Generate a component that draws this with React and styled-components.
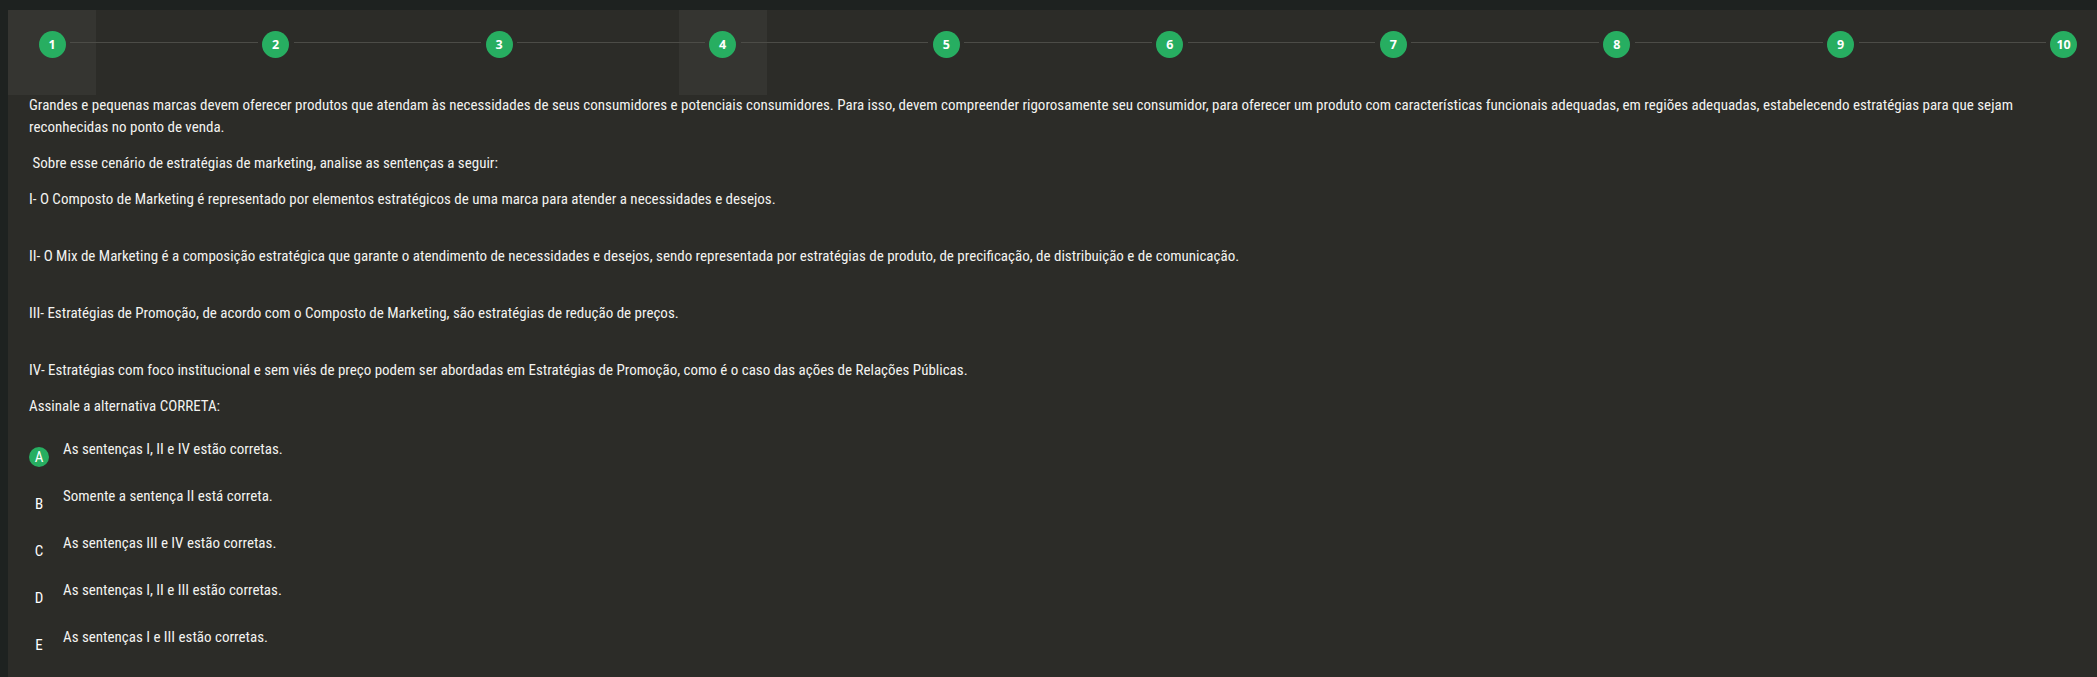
import React from "react";
import styled, { createGlobalStyle } from "styled-components";

const GlobalStyle = createGlobalStyle`
  html, body {
    margin: 0;
    padding: 0;
    background: #1e2220;
  }
  body {
    font-family: Roboto, "Open Sans", "Liberation Sans", sans-serif;
    font-stretch: 75%;
    font-weight: 400;
    color: #f3f3f0;
  }
  * { box-sizing: border-box; }
`;

const Page = styled.div`
  padding: 10px 0 0 8px;
  min-height: 100vh;
`;

const Panel = styled.main`
  background: #2c2c28;
  min-height: calc(100vh - 10px);
  overflow: hidden;
`;

const Stepper = styled.nav`
  display: flex;
  align-items: flex-start;
`;

const Step = styled.div`
  display: flex;
  align-items: flex-start;
  flex: ${(p) => (p.$last ? "none" : "1 1 0")};
  min-width: 0;
`;

const StepCell = styled.div`
  flex: none;
  width: ${(p) => (p.$last ? "77px" : "88px")};
  height: 85px;
  padding-top: 21px;
  padding-left: ${(p) => (p.$last ? "30px" : "0")};
  display: flex;
  justify-content: ${(p) => (p.$last ? "flex-start" : "center")};
  background: ${(p) => (p.$highlight ? "#353531" : "transparent")};
`;

const StepCircle = styled.span`
  width: 27px;
  height: 27px;
  border-radius: 50%;
  background: #27ae61;
  color: #ffffff;
  display: flex;
  align-items: center;
  justify-content: center;
  font-family: "Open Sans", sans-serif;
  font-stretch: 100%;
  font-weight: 700;
  font-size: 12.5px;
  position: relative;
  z-index: 2;
`;

const Connector = styled.span`
  flex: 1 1 auto;
  height: 1px;
  margin: 32px -26px 0;
  background: #4c4c47;
  position: relative;
  z-index: 1;
`;

const Content = styled.section`
  padding: 0 21px 20px;
  margin-top: -1px;
  font-size: 15px;
  line-height: 22px;
`;

const Para = styled.p`
  margin: 0 0 ${(p) => (p.$spaced ? "35px" : "14px")};
  white-space: pre-wrap;
`;

const Options = styled.ol`
  list-style: none;
  margin: 21px 0 0;
  padding: 0;
  display: flex;
  flex-direction: column;
  gap: 18px;
`;

const Option = styled.li`
  display: flex;
  align-items: flex-start;
  gap: 14px;
`;

const Letter = styled.span`
  flex: none;
  width: 20px;
  height: 20px;
  margin-top: 9px;
  border-radius: 50%;
  display: flex;
  align-items: center;
  justify-content: center;
  font-size: 15px;
  line-height: 1;
  color: #ffffff;
  background: ${(p) => (p.$selected ? "#27ae61" : "transparent")};
`;

const OptionText = styled.span`
  line-height: 22px;
`;

const steps = [1, 2, 3, 4, 5, 6, 7, 8, 9, 10];
const highlighted = [1, 4];

const paragraphs = [
  { text: "Grandes e pequenas marcas devem oferecer produtos que atendam às necessidades de seus consumidores e potenciais consumidores. Para isso, devem compreender rigorosamente seu consumidor, para oferecer um produto com características funcionais adequadas, em regiões adequadas, estabelecendo estratégias para que sejam reconhecidas no ponto de venda." },
  { text: " Sobre esse cenário de estratégias de marketing, analise as sentenças a seguir:" },
  { text: "I- O Composto de Marketing é representado por elementos estratégicos de uma marca para atender a necessidades e desejos.", spaced: true },
  { text: "II- O Mix de Marketing é a composição estratégica que garante o atendimento de necessidades e desejos, sendo representada por estratégias de produto, de precificação, de distribuição e de comunicação.", spaced: true },
  { text: "III- Estratégias de Promoção, de acordo com o Composto de Marketing, são estratégias de redução de preços.", spaced: true },
  { text: "IV- Estratégias com foco institucional e sem viés de preço podem ser abordadas em Estratégias de Promoção, como é o caso das ações de Relações Públicas." },
  { text: "Assinale a alternativa CORRETA:" },
];

const options = [
  { letter: "A", text: "As sentenças I, II e IV estão corretas.", selected: true },
  { letter: "B", text: "Somente a sentença II está correta." },
  { letter: "C", text: "As sentenças III e IV estão corretas." },
  { letter: "D", text: "As sentenças I, II e III estão corretas." },
  { letter: "E", text: "As sentenças I e III estão corretas." },
];

export default function App() {
  return (
    <>
      <GlobalStyle />
      <Page>
        <Panel>
          <Stepper>
            {steps.map((n) => {
              const last = n === steps.length;
              return (
                <Step key={n} $last={last}>
                  <StepCell $highlight={highlighted.includes(n)} $last={last}>
                    <StepCircle>{n}</StepCircle>
                  </StepCell>
                  {!last && <Connector />}
                </Step>
              );
            })}
          </Stepper>
          <Content>
            {paragraphs.map((p, i) => (
              <Para key={i} $spaced={p.spaced}>{p.text}</Para>
            ))}
            <Options>
              {options.map((o) => (
                <Option key={o.letter}>
                  <Letter $selected={o.selected}>{o.letter}</Letter>
                  <OptionText>{o.text}</OptionText>
                </Option>
              ))}
            </Options>
          </Content>
        </Panel>
      </Page>
    </>
  );
}
